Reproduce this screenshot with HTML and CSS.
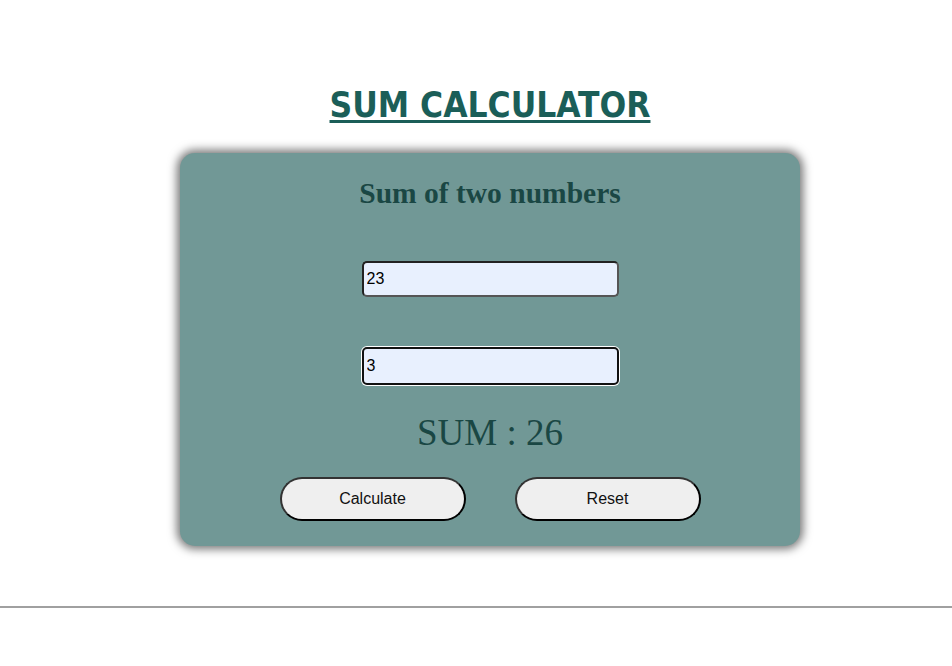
FILE: index.html
```html
<!DOCTYPE html>
<html>
<head>
<meta charset="utf-8">
<link rel="stylesheet" href="styles.css">
</head>
<body>
<div class="page">
  <h1 class="title">SUM CALCULATOR</h1>
  <div class="card">
    <h2 class="card-heading">Sum of two numbers</h2>
    <input class="num-input first" type="text" value="23">
    <input class="num-input second" type="text" value="3">
    <div class="result">SUM : 26</div>
    <div class="actions">
      <button class="btn">Calculate</button>
      <button class="btn">Reset</button>
    </div>
  </div>
</div>
<hr class="rule">
</body>
</html>
```
FILE: styles.css
```css
html, body {
  margin: 0;
  padding: 0;
  background: #ffffff;
}
.page {
  width: 620px;
  margin-left: 180px;
  padding-top: 84px;
  display: flex;
  flex-direction: column;
  align-items: center;
}
.title {
  margin: 0;
  font-family: "DejaVu Sans Condensed", "DejaVu Sans", sans-serif;
  font-weight: bold;
  font-size: 35px;
  line-height: 42px;
  color: #1b5e58;
  text-decoration: underline;
  text-decoration-thickness: 3px;
  text-underline-offset: 3px;
}
.card {
  box-sizing: border-box;
  width: 620px;
  height: 393px;
  margin-top: 27px;
  background: #719896;
  border-radius: 15px;
  box-shadow: 0 0 10px 3px rgba(0, 0, 0, 0.55);
  display: flex;
  flex-direction: column;
  align-items: center;
  padding-top: 23px;
}
.card-heading {
  margin: 0;
  font-family: "Liberation Serif", serif;
  font-weight: bold;
  font-size: 29.5px;
  line-height: 35px;
  color: #1a4744;
}
.num-input {
  box-sizing: border-box;
  width: 257px;
  height: 36px;
  border: 2px solid #4a4a4a;
  border-radius: 5px;
  background: #e8f0fe;
  font-family: "Liberation Sans", Arial, sans-serif;
  font-size: 16px;
  color: #000;
  padding: 0 3px;
  outline: none;
}
.num-input.first {
  margin-top: 50px;
  border-color: #555;
  border-top-color: #222;
  border-left-color: #222;
}
.num-input.second {
  margin-top: 50px;
  height: 38px;
  border: 2px solid #111;
  box-shadow: 0 0 0 1px #ffffff;
}
.result {
  margin-top: 26px;
  font-family: "Liberation Serif", serif;
  font-size: 37px;
  line-height: 43px;
  color: #1a4744;
}
.actions {
  margin-top: 23px;
  display: flex;
  gap: 49px;
}
.btn {
  box-sizing: border-box;
  width: 186px;
  height: 44px;
  border: 2px solid #333;
  border-bottom-color: #000;
  border-right-color: #000;
  border-radius: 22px;
  background: #efefef;
  font-family: "Liberation Sans", Arial, sans-serif;
  font-size: 16px;
  color: #111;
}
.rule {
  margin: 60px 0 0 0;
  border: none;
  border-top: 2px solid #a0a0a0;
}
```
